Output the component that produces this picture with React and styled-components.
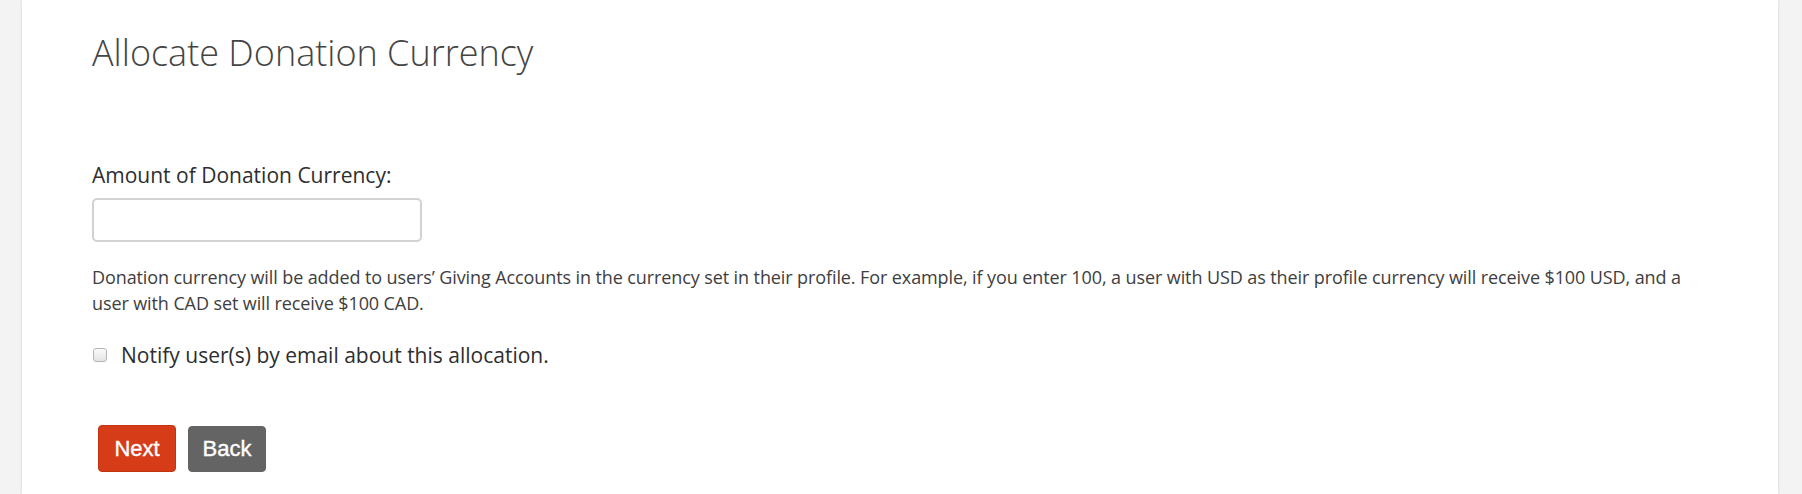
import React from "react";
import styled, { createGlobalStyle } from "styled-components";

const GlobalStyle = createGlobalStyle`
  html, body {
    margin: 0;
    padding: 0;
    background: #f3f3f3;
    font-family: "Open Sans", "Liberation Sans", sans-serif;
  }
`;

const Page = styled.div`
  margin: 0 24px 0 22px;
`;

const Panel = styled.section`
  background: #ffffff;
  min-height: 494px;
  box-sizing: border-box;
  padding: 33px 70px 0 70px;
  box-shadow: 0 0 3px rgba(0, 0, 0, 0.14);
`;

const Title = styled.h1`
  margin: 0;
  font-family: "Open Sans", sans-serif;
  font-weight: 300;
  font-size: 36px;
  line-height: 40px;
  color: #444444;
`;

const Field = styled.div`
  margin-top: 88px;
  display: flex;
  flex-direction: column;
  align-items: flex-start;
`;

const Label = styled.label`
  font-size: 21px;
  line-height: 28px;
  color: #2e2e2e;
`;

const TextInput = styled.input`
  margin-top: 9px;
  width: 330px;
  height: 44px;
  box-sizing: border-box;
  border: 2px solid #d2d2d2;
  border-radius: 5px;
  background: #fff;
  outline: none;
`;

const Help = styled.p`
  margin: 22px 0 0 0;
  max-width: 1612px;
  font-size: 18px;
  letter-spacing: -0.1px;
  line-height: 26px;
  color: #3e3e3e;
`;

const CheckRow = styled.label`
  margin-top: 25px;
  display: flex;
  align-items: center;
  gap: 14px;
  font-size: 21px;
  line-height: 28px;
  color: #2e2e2e;
`;

const Box = styled.input`
  appearance: none;
  margin: 0 0 0 1px;
  width: 14px;
  height: 14px;
  border: 1px solid #b5b5b5;
  border-radius: 3px;
  background: linear-gradient(#fafafa, #e4e4e4);
`;

const Actions = styled.div`
  margin-top: 56px;
  padding-left: 6px;
  display: flex;
  align-items: flex-end;
  gap: 12px;
`;

const Button = styled.button`
  min-width: 78px;
  height: ${(p) => (p.$primary ? "47px" : "46px")};
  box-sizing: border-box;
  padding: 0 12px;
  border-radius: 4px;
  border: 1px solid ${(p) => (p.$primary ? "#c2330f" : "#636363")};
  background: ${(p) => (p.$primary ? "#d63c17" : "#646464")};
  color: #ffffff;
  font-family: "Liberation Sans", Arial, sans-serif;
  font-weight: 400;
  font-size: 22px;
  -webkit-text-stroke: 0.4px #ffffff;
  cursor: pointer;
`;

export default function App() {
  return (
    <Page>
      <GlobalStyle />
      <Panel>
        <Title>Allocate Donation Currency</Title>
        <Field>
          <Label htmlFor="amount">Amount of Donation Currency:</Label>
          <TextInput id="amount" type="text" />
        </Field>
        <Help>
          Donation currency will be added to users’ Giving Accounts in the
          currency set in their profile. For example, if you enter 100, a user
          with USD as their profile currency will receive $100 USD, and a user
          with CAD set will receive $100 CAD.
        </Help>
        <CheckRow>
          <Box type="checkbox" />
          Notify user(s) by email about this allocation.
        </CheckRow>
        <Actions>
          <Button $primary>Next</Button>
          <Button>Back</Button>
        </Actions>
      </Panel>
    </Page>
  );
}
